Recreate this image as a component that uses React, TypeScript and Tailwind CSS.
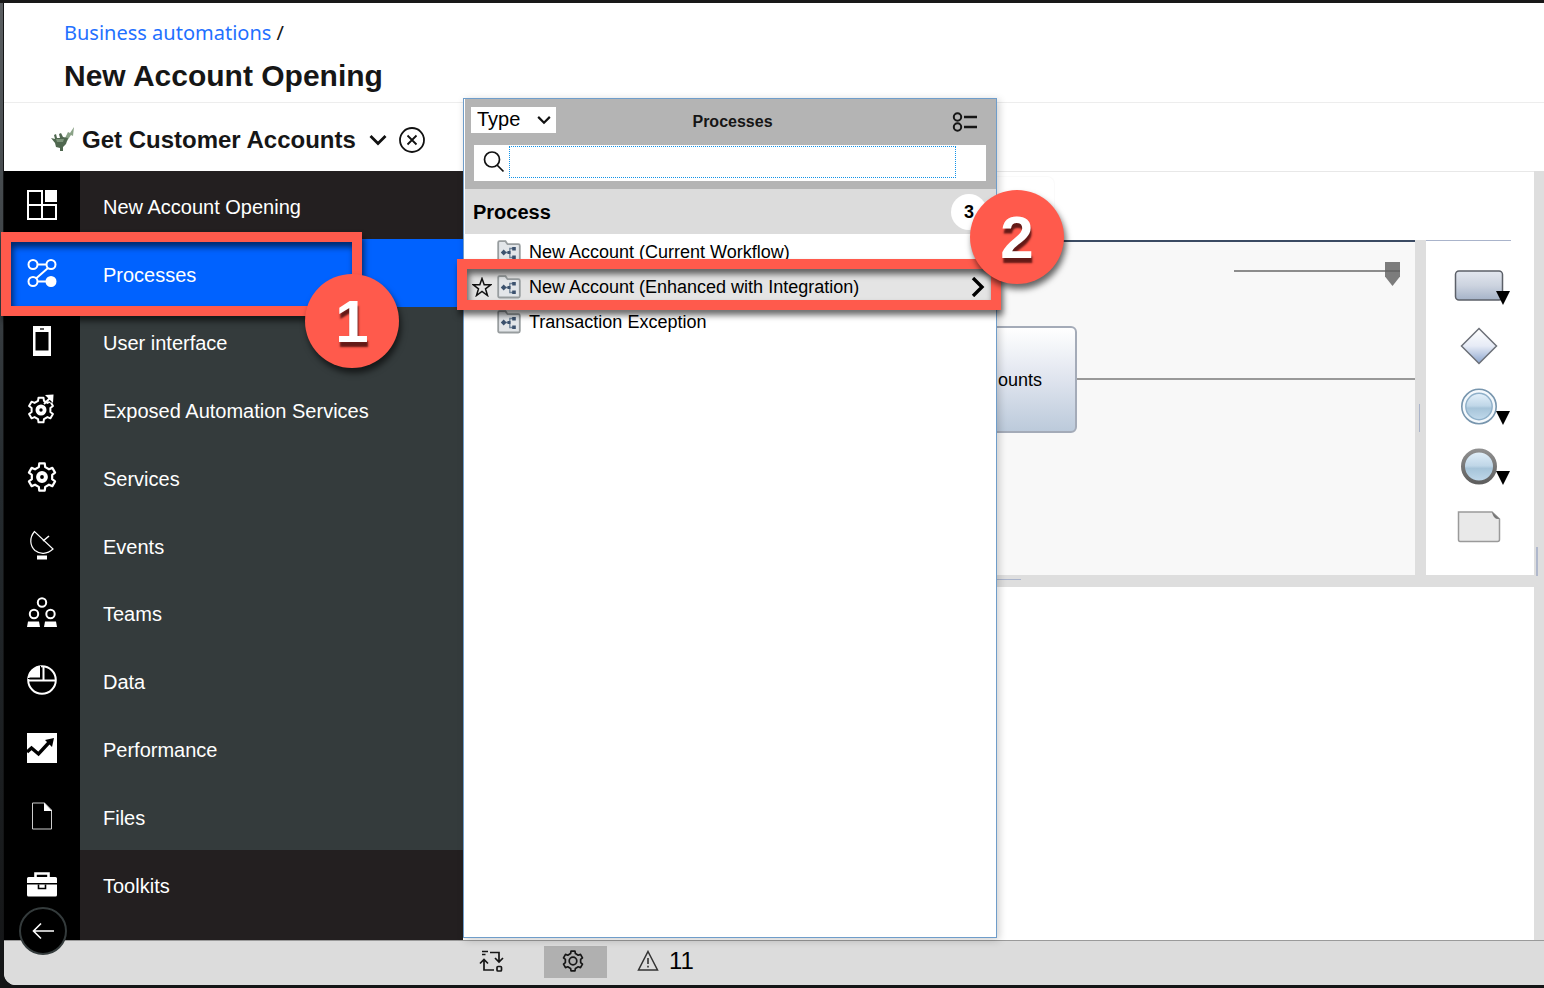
import React from "react";

function polar(c: number, r: number, deg: number): string {
  const a = (deg * Math.PI) / 180;
  return `${(c + r * Math.sin(a)).toFixed(2)} ${(c - r * Math.cos(a)).toFixed(2)}`;
}

/** Outline of a cog wheel centred in a square of side 2c. */
function gearPath(c: number, outer: number, inner: number, teeth: number): string {
  const step = 360 / teeth;
  const pts: string[] = [];
  for (let i = 0; i < teeth; i++) {
    const m = i * step;
    pts.push(
      polar(c, inner, m - step * 0.3),
      polar(c, outer, m - step * 0.19),
      polar(c, outer, m + step * 0.19),
      polar(c, inner, m + step * 0.3),
    );
  }
  return `M${pts.join("L")}Z`;
}

function Icon({ children }: { children: React.ReactNode }) {
  return (
    <svg width="30" height="30" viewBox="0 0 30 30" fill="none" stroke="#fff" strokeWidth="2" aria-hidden="true">
      {children}
    </svg>
  );
}

const icons: Record<string, React.ReactNode> = {
  dashboard: (
    <>
      <path d="M1 1h14v28H1zM1 15h28v14H1" />
      <path d="M15 15h14v14H15z" />
      <path d="M18 0h12v12H18z" fill="#fff" stroke="none" />
    </>
  ),
  processes: (
    <>
      <circle cx="6" cy="6.500" r="4.500" />
      <circle cx="24" cy="6.500" r="4.500" />
      <circle cx="6" cy="23.500" r="4.500" />
      <circle cx="24" cy="23.500" r="4.500" fill="#fff" />
      <path d="M10.500 6.500h9M21 10L9 20.500M10.500 23.500h9" />
    </>
  ),
  phone: (
    <>
      <path fillRule="evenodd" fill="#fff" stroke="none" d="M6 0h18v30H6zM8.500 6v18.500h13V6z" />
      <path d="M13 3h4" stroke="#000" strokeWidth="1.300" />
    </>
  ),
  exposed: (
    <>
      <path d={gearPath(14, 12.6, 9.6, 6)} transform="translate(0 2)" strokeLinejoin="round" />
      <circle cx="14" cy="16" r="3.600" strokeWidth="3.800" />
      <path d="M19.500 0H30v8.500h-6.500l-4-4z" fill="#000" stroke="none" />
      <path d="M17 10l6-6" strokeWidth="2" />
      <path d="M18 1l8.500-.5L26 9z" fill="#fff" stroke="none" />
    </>
  ),
  gear: (
    <>
      <path d={gearPath(15, 13.8, 10.4, 6)} strokeLinejoin="round" strokeWidth="2.200" />
      <circle cx="15" cy="15" r="3.900" strokeWidth="4" />
    </>
  ),
  dish: (
    <>
      <path d="M7.500 1.500C2 8 3 16 8 20.500c5 4 12 4 18-1.500z" strokeWidth="1.200" />
      <path d="M16 11l6-5" strokeWidth="1.600" />
      <path d="M10 25.500h10v4H10z" fill="#fff" stroke="none" />
    </>
  ),
  teams: (
    <>
      <circle cx="15" cy="5.500" r="4.200" />
      <circle cx="7" cy="17" r="4.200" />
      <circle cx="23.500" cy="17" r="4.200" />
      <path d="M0 30l1-5.500h11l1 5.500zM17 30l1-5.500h11l1 5.500z" fill="#fff" stroke="none" />
    </>
  ),
  data: (
    <>
      <circle cx="15" cy="15" r="13.800" />
      <path d="M13.500 1v11.500H1.500A13 13 0 0 1 13.500 1z" fill="#fff" stroke="none" />
      <path d="M13.500 1v12.500H1" stroke="#000" strokeWidth="1" />
      <path d="M16.500 1v14M1 15.500h28" />
    </>
  ),
  performance: (
    <>
      <path d="M0 0h30v30H0z" fill="#fff" stroke="none" />
      <path d="M0 19l4.500-4 7 6L22 9.500" stroke="#000" strokeWidth="3.400" />
      <path d="M18 7l9-2-2 9z" fill="#000" stroke="none" />
    </>
  ),
  file: (
    <>
      <path d="M5.500 2h12l7 7v19h-19z" strokeWidth="1" stroke="#ccc" />
      <path d="M17 1.500L25 10h-8z" fill="#fff" stroke="none" />
    </>
  ),
  toolkit: (
    <>
      <path d="M8.500 9V4.500h13V9" strokeWidth="2.600" />
      <path d="M0 14V9.500Q0 8 1.500 8h27Q30 8 30 9.500V14zM0 15.500h30v10.500q0 1.500-1.500 1.500h-27Q0 27.500 0 26z" fill="#fff" stroke="none" />
      <path d="M11.500 15.500v4h7v-4" stroke="#000" strokeWidth="1.600" />
    </>
  ),
};

const navItems = [
  { label: "New Account Opening", icon: "dashboard", tone: "dark" },
  { label: "Processes", icon: "processes", tone: "active" },
  { label: "User interface", icon: "phone", tone: "slate" },
  { label: "Exposed Automation Services", icon: "exposed", tone: "slate" },
  { label: "Services", icon: "gear", tone: "slate" },
  { label: "Events", icon: "dish", tone: "slate" },
  { label: "Teams", icon: "teams", tone: "slate" },
  { label: "Data", icon: "data", tone: "slate" },
  { label: "Performance", icon: "performance", tone: "slate" },
  { label: "Files", icon: "file", tone: "slate" },
  { label: "Toolkits", icon: "toolkit", tone: "last" },
];

const rowTone: Record<string, string> = {
  dark: "flex-1 bg-[#231f20]",
  active: "flex-1 bg-[#0062ff]",
  slate: "flex-1 bg-[#343b3c]",
  last: "h-[90px] bg-[#231f20]",
};

function Sidebar() {
  return (
    <nav aria-label="Library" className="w-[459px] shrink-0">
      <ul className="flex h-full flex-col">
        {navItems.map((item) => (
          <li key={item.label} className={`flex ${rowTone[item.tone]}`}>
            <a href="#" className="flex w-full text-xl text-white">
              <span className={`flex w-[76px] items-start justify-center pt-[19px] ${item.tone === "active" ? "" : "bg-black"}`}>
                <Icon>{icons[item.icon]}</Icon>
              </span>
              <span className="pt-[22px] pl-[23px] leading-7">{item.label}</span>
            </a>
          </li>
        ))}
      </ul>
    </nav>
  );
}

function Chevron({ size }: { size: number }) {
  return (
    <svg width={size} height={size} viewBox="0 0 18 18" fill="none" stroke="#111" strokeWidth="2.800" aria-hidden="true">
      <path d="M1.500 5l7.500 7.500L16.500 5" />
    </svg>
  );
}

function FolderIcon() {
  return (
    <svg width="24" height="24" viewBox="0 0 24 24" aria-hidden="true">
      <path d="M1.200 4.500V2.500q0-1.300 1.300-1.300h6l2 3h10.800q1.500 0 1.500 1.500v15.300q0 1.500-1.500 1.500H2.700q-1.500 0-1.500-1.500z" fill="#e3e6e9" stroke="#989d9f" strokeWidth="1.800" />
      <path d="M6 12.500h6.500M16 8.500h-3.200v9H16" fill="none" stroke="#6f8399" strokeWidth="1.300" />
      <path d="M3.800 12.500l2.900-2.900 2.900 2.900-2.900 2.900z" fill="#3c526e" />
      <path d="M10.500 11h3v3h-3zM15.200 7h3.600v3.400h-3.600zM15.200 15.500h3.600V19h-3.600z" fill="#3c526e" />
    </svg>
  );
}

const processes = [
  { name: "New Account (Current Workflow)", selected: false },
  { name: "New Account (Enhanced with Integration)", selected: true },
  { name: "Transaction Exception", selected: false },
];

function ProcessPanel() {
  return (
    <section
      aria-label="Processes"
      className="absolute top-[98px] bottom-[50px] left-[463px] w-[534px] border border-[#6f9dca] bg-white text-black shadow-[2px_2px_8px_rgba(0,0,0,0.2)]"
    >
      <div className="ml-px h-[90px] bg-[#b4b4b4] pt-2">
        <div className="flex items-center pr-[18px] pl-[6px]">
          <div className="relative">
            <select aria-label="Group by" className="block h-[26px] w-[85px] appearance-none bg-white pb-[2px] pl-[6px] text-xl leading-6 outline-none">
              <option>Type</option>
            </select>
            <span className="pointer-events-none absolute top-[6px] right-[5px]">
              <Chevron size={14} />
            </span>
          </div>
          <h2 className="flex-1 pt-1 pr-[43px] text-center text-base leading-[22px] font-bold text-[#161616]">Processes</h2>
          <button type="button" aria-label="View options" className="pt-1">
            <svg width="26" height="20" viewBox="0 0 26 20" fill="none" stroke="#161616" strokeWidth="2">
              <circle cx="5.500" cy="5" r="3.700" />
              <circle cx="5.500" cy="15" r="3.700" />
              <path d="M12 5h13M12 15h13" strokeWidth="2.600" />
            </svg>
          </button>
        </div>
        <div className="mt-3 mr-[10px] ml-[9px] flex h-9 items-center bg-white pb-[2px] pl-[9px]">
          <svg width="22" height="22" viewBox="0 0 22 22" fill="none" stroke="#111" strokeWidth="1.700" aria-hidden="true">
            <circle cx="9" cy="8.500" r="7.500" />
            <path d="M14 14l6.500 6.500" />
          </svg>
          <input type="text" aria-label="Search" className="ml-1 h-8 w-[447px] border border-dotted border-[#1192e8] text-lg outline-none" />
        </div>
      </div>
      <div className="ml-px flex h-[45px] items-center justify-between bg-[#dcdcdc] pr-[9px] pl-2">
        <h3 className="text-xl leading-6 font-bold">Process</h3>
        <span className="flex h-9 w-9 items-center justify-center rounded-full bg-white text-lg font-bold">3</span>
      </div>
      <ul>
        {processes.map((p) => (
          <li key={p.name} className={`flex h-[35px] items-center pr-[10px] pl-2 ${p.selected ? "bg-[#e4e4e4]" : ""}`}>
            <span className="w-[25px]">
              {p.selected && (
                <svg width="20" height="20" viewBox="0 0 20 20" fill="none" stroke="#111" strokeWidth="1.500" aria-hidden="true">
                  <path d="M10 1.500l2.200 6.300h6.600l-5.300 4 2 6.700-5.500-4-5.500 4 2-6.700-5.300-4h6.600z" />
                </svg>
              )}
            </span>
            <FolderIcon />
            <a href="#" className="flex-1 pl-2 text-lg">
              {p.name}
            </a>
            {p.selected && (
              <svg width="16" height="20" viewBox="0 0 16 20" fill="none" stroke="#000" strokeWidth="3.400" aria-hidden="true">
                <path d="M3 1l9 9-9 9" />
              </svg>
            )}
          </li>
        ))}
      </ul>
    </section>
  );
}

const DropMark = () => <path d="M46 34h14l-7 14z" fill="#000" />;

const palette = [
  {
    name: "Activity",
    art: (
      <>
        <rect x="5.500" y="14" width="47" height="29" rx="3.500" fill="url(#steel)" stroke="#5c6068" strokeWidth="1.500" />
        <DropMark />
      </>
    ),
  },
  {
    name: "Gateway",
    art: <path d="M29 11.500L46.500 29 29 46.500 11.500 29z" fill="url(#frost)" stroke="#6c7078" strokeWidth="1.500" />,
  },
  {
    name: "Intermediate event",
    art: (
      <>
        <circle cx="29" cy="29.500" r="17.200" fill="#f4f9fd" stroke="#7795ad" strokeWidth="1.600" />
        <circle cx="29" cy="29.500" r="13.200" fill="url(#water)" stroke="#8fb0c9" strokeWidth="1.400" />
        <DropMark />
      </>
    ),
  },
  {
    name: "End event",
    art: (
      <>
        <circle cx="29" cy="29.500" r="16" fill="url(#water)" stroke="url(#rim)" strokeWidth="4" />
        <DropMark />
      </>
    ),
  },
  {
    name: "Note",
    art: (
      <>
        <path d="M8.500 15H42l7.500 7V42.500q0 2-2 2H10q-1.500 0-1.500-2z" fill="#e9e9e9" stroke="#9a9a9a" strokeWidth="1.500" />
        <path d="M42 15l7.500 7q-6 1-7.500-7z" fill="#777" />
      </>
    ),
  },
];

function Palette() {
  return (
    <aside aria-label="Palette" className="w-[108px] bg-white">
      <div className="mr-[23px] h-px bg-[#aab4cb]" />
      <svg width="0" height="0" className="absolute" aria-hidden="true">
        <defs>
          <linearGradient id="steel" x2="0" y2="1">
            <stop offset="0" stopColor="#e3e7ef" />
            <stop offset="0.500" stopColor="#ccd3df" />
            <stop offset="1" stopColor="#a5b3c8" />
          </linearGradient>
          <linearGradient id="frost" x2="0" y2="1">
            <stop offset="0" stopColor="#ffffff" />
            <stop offset="0.500" stopColor="#e6ebf6" />
            <stop offset="1" stopColor="#8ba5cd" />
          </linearGradient>
          <linearGradient id="water" x2="0" y2="1">
            <stop offset="0" stopColor="#e4f1fb" />
            <stop offset="0.480" stopColor="#bfd6e7" />
            <stop offset="0.560" stopColor="#a6c4d9" />
            <stop offset="1" stopColor="#c1d9eb" />
          </linearGradient>
          <linearGradient id="rim" x2="0" y2="1">
            <stop offset="0" stopColor="#8f8f8f" />
            <stop offset="1" stopColor="#5f5f5f" />
          </linearGradient>
        </defs>
      </svg>
      <div className="flex flex-col pt-4 pl-6">
        {palette.map((p) => (
          <button key={p.name} type="button" aria-label={p.name} className="h-[60px] w-[60px]">
            <svg width="60" height="60" viewBox="0 0 60 60">
              {p.art}
            </svg>
          </button>
        ))}
      </div>
    </aside>
  );
}

function Editor() {
  return (
    <main className="flex min-w-0 flex-1">
      <div className="flex min-w-0 flex-1 flex-col border-t border-[#e8e8e8] bg-white">
        <div className="h-[68px] pt-1">
          <div className="h-10 w-[592px] rounded-tr-lg border-t border-r border-[#fafafa]" />
        </div>
        <div className="flex h-[335px]">
          <div className="relative min-w-0 flex-1 border-t-2 border-[#3b4b63] bg-[#f8f8f8]">
            <input
              type="range"
              aria-label="Zoom"
              defaultValue={100}
              className="absolute top-5 right-[15px] h-6 w-[166px] appearance-none bg-linear-to-r from-[#8c8c8c] to-[#8c8c8c] bg-[length:100%_2px] bg-[position:0_8px] bg-no-repeat [&::-webkit-slider-thumb]:h-6 [&::-webkit-slider-thumb]:w-[15px] [&::-webkit-slider-thumb]:appearance-none [&::-webkit-slider-thumb]:bg-linear-to-b [&::-webkit-slider-thumb]:from-[#7c7c7c] [&::-webkit-slider-thumb]:from-[8px] [&::-webkit-slider-thumb]:via-[#555] [&::-webkit-slider-thumb]:via-[9px] [&::-webkit-slider-thumb]:to-[#7c7c7c] [&::-webkit-slider-thumb]:to-[10px] [&::-webkit-slider-thumb]:[clip-path:polygon(0_0,100%_0,100%_60%,50%_100%,0_60%)]"
            />
            <div className="absolute top-[84px] right-[338px] flex h-[107px] w-[140px] items-center justify-end rounded-md border-2 border-[#a4abb8] bg-linear-to-b from-white via-[#dfe4ee] to-[#bccadb] pr-[33px] text-lg text-black">
              ounts
            </div>
            <div className="absolute top-[136px] right-0 h-[2px] w-[338px] bg-[#999]" />
          </div>
          <div className="flex w-[11px] items-center justify-center bg-[#dedede] pt-5">
            <div className="mr-[3px] h-7 w-px bg-[#aab4cb]" />
          </div>
          <Palette />
        </div>
        <div className="h-3 bg-[#dedede]">
          <div className="h-[5px] w-[558px] border-b border-[#aab4cb]" />
        </div>
        <div className="flex-1" />
      </div>
      <div className="w-[10px] bg-[#dedede] pt-[376px]">
        <div className="ml-[2px] h-[29px] w-[2px] bg-[#b0b8cc]" />
      </div>
    </main>
  );
}

export default function App() {
  return (
    <div className="relative flex min-h-screen flex-col bg-[#141516] bg-linear-to-b from-[#5b5f62] via-[#252b2f] to-[#141516] bg-[length:3px_100%] bg-no-repeat pl-1 font-['Liberation_Sans',Arial,sans-serif] text-[#161616]">
      <div className="-ml-1 h-[3px] bg-[#181818]" />
      <div className="flex flex-1 flex-col overflow-hidden rounded-bl-[12px] bg-white">
        <header className="h-[100px] border-b border-[#ededed] pt-4 pl-[60px]">
          <div className="font-['Noto_Sans',sans-serif] text-xl leading-7">
            <a href="#" className="text-[#1f70ff]">
              Business automations
            </a>{" "}
            /
          </div>
          <h1 className="pt-[11px] text-[30px] leading-9 font-bold">New Account Opening</h1>
        </header>
        <div className="flex h-[68px] items-center pt-[6px] pl-[46px]">
          <svg width="26" height="26" viewBox="0 0 26 26" aria-hidden="true">
            <path d="M15 11l3-6 2 1 4-6-1 9-2-1-4 6z" fill="#8aa287" />
            <path d="M1 11l4 1-1-4 2-1 1 4h3l-1-4 2-1 2 4 5 1-2 6-3 3v4h-3v-3l-4-1-1-4z" fill="#4f674f" />
            <path d="M6 12l8 0-1 3H7z" fill="#7c947a" />
          </svg>
          <h2 className="pl-[6px] text-2xl leading-7 font-bold">Get Customer Accounts</h2>
          <button type="button" aria-label="Switch artifact" className="ml-[13px]">
            <Chevron size={18} />
          </button>
          <button type="button" aria-label="Close" className="ml-3">
            <svg width="26" height="26" viewBox="0 0 26 26" fill="none" stroke="#111" strokeWidth="1.800">
              <circle cx="13" cy="13" r="12" />
              <path d="M8.500 8.500l9 9M17.500 8.500l-9 9" />
            </svg>
          </button>
        </div>
        <div className="flex flex-1">
          <Sidebar />
          <Editor />
        </div>
        <footer className="flex h-[45px] items-center border-t border-[#9a9a9a] bg-[#dcdcdc] pb-[2px] pl-[475px]">
          <button type="button" aria-label="Refresh" className="pb-[2px]">
            <svg width="26" height="24" viewBox="0 0 26 24" fill="none" stroke="#161616" strokeWidth="1.700">
              <path d="M3 2.500h6M3 5.500h3.500M11 3.500h9v9M16 9l4 4 4-4" />
              <path d="M5 10.500v10.500h10M1 14.500l4-4 4 4" />
              <rect x="18" y="17.500" width="4.500" height="4.500" rx="1" />
            </svg>
          </button>
          <button type="button" aria-label="Settings" className="ml-[39px] flex h-8 w-[63px] items-center justify-center bg-[#b0b0b0] pr-[6px] pb-[2px]">
            <svg width="22" height="22" viewBox="0 0 22 22" fill="none" stroke="#161616" strokeWidth="1.700" strokeLinejoin="round">
              <path d={gearPath(11, 10, 7.8, 6)} />
              <circle cx="11" cy="11" r="3.800" />
            </svg>
          </button>
          <button type="button" className="ml-[30px] flex items-center gap-[10px] pb-[2px] text-2xl leading-8 text-black">
            <svg width="22" height="22" viewBox="0 0 22 22" fill="none" stroke="#333" strokeWidth="1.500" aria-hidden="true">
              <path d="M11 1.500L20.500 20H1.500z" />
              <path d="M11 8v6M11 15.800v1.800" strokeWidth="1.600" />
            </svg>
            11
          </button>
        </footer>
      </div>
      <div className="h-[3px] bg-[#141516]" />

      <button
        type="button"
        aria-label="Collapse"
        className="absolute bottom-[33px] left-[19px] flex h-12 w-12 items-center justify-center rounded-full border-2 border-[#343b3c] bg-black"
      >
        <svg width="22" height="18" viewBox="0 0 22 18" fill="none" stroke="#fff" strokeWidth="1.600">
          <path d="M22 9H2M9 1.500L1.500 9 9 16.500" />
        </svg>
      </button>

      <ProcessPanel />

      <div className="pointer-events-none absolute top-[232px] left-px h-[84px] w-[361px] border-[10px] border-[#ff5a4c] drop-shadow-[2px_5px_3px_rgba(0,0,0,0.6)]" />
      <div className="pointer-events-none absolute top-[259px] left-[457px] h-[51px] w-[544px] border-[10px] border-[#ff5a4c] drop-shadow-[2px_5px_3px_rgba(0,0,0,0.6)]" />
      <div className="pointer-events-none absolute top-[274px] left-[305px] flex h-[94px] w-[94px] items-center justify-center rounded-full bg-[#ff5a4c] pt-[2px] text-[60px] leading-none font-bold text-white drop-shadow-[2px_5px_3px_rgba(0,0,0,0.6)] [text-shadow:1px_5px_2px_rgba(60,10,10,0.8)]">
        1
      </div>
      <div className="pointer-events-none absolute top-[190px] left-[970px] flex h-[94px] w-[94px] items-center justify-center rounded-full bg-[#ff5a4c] pt-[2px] text-[60px] leading-none font-bold text-white drop-shadow-[2px_5px_3px_rgba(0,0,0,0.6)] [text-shadow:1px_5px_2px_rgba(60,10,10,0.8)]">
        2
      </div>
    </div>
  );
}
